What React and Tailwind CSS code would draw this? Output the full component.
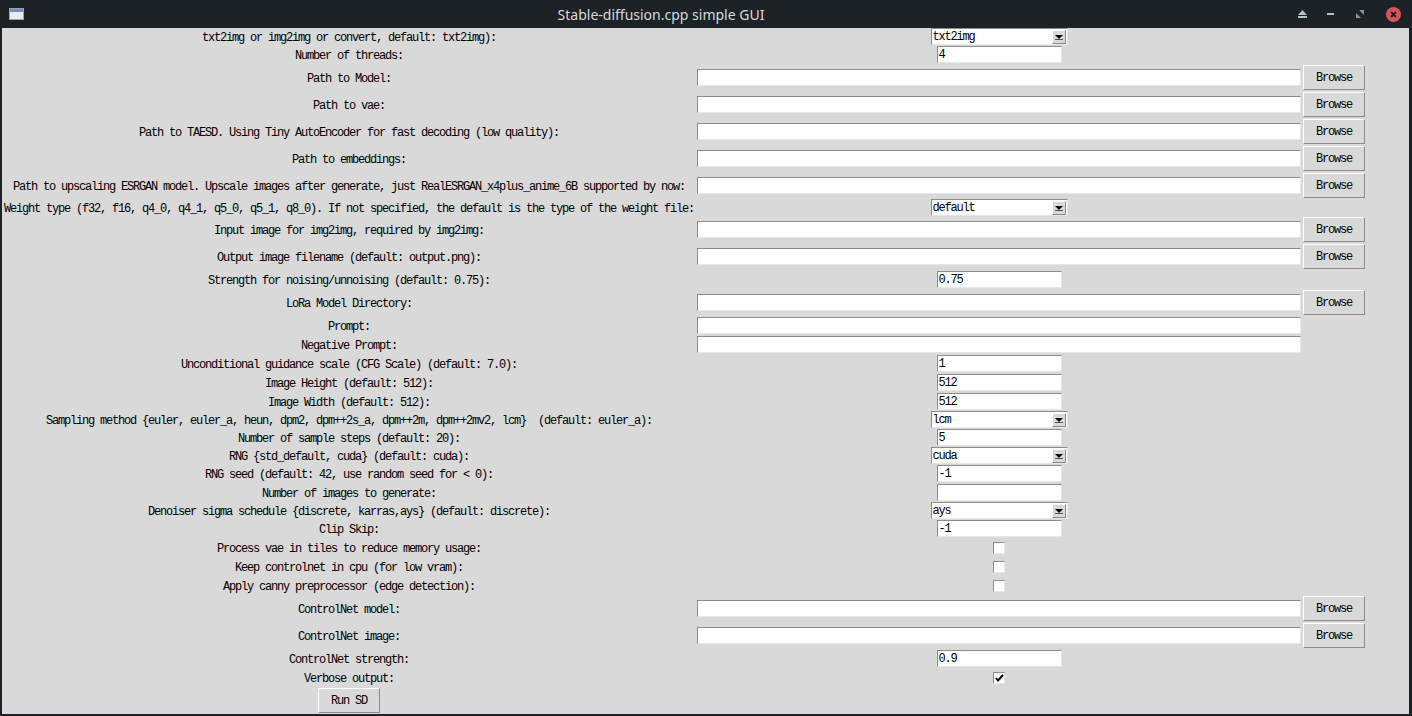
import React from "react";

// form rows, top to bottom (kind decides the widget in the middle column)
const rows = [
  { kind: "combo", label: "txt2img or img2img or convert, default: txt2img):", value: "txt2img" },
  { kind: "short", label: "Number of threads:", value: "4" },
  { kind: "file", label: "Path to Model:" },
  { kind: "file", label: "Path to vae:" },
  { kind: "file", label: "Path to TAESD. Using Tiny AutoEncoder for fast decoding (low quality):" },
  { kind: "file", label: "Path to embeddings:" },
  { kind: "file", label: "Path to upscaling ESRGAN model. Upscale images after generate, just RealESRGAN_x4plus_anime_6B supported by now:" },
  { kind: "combo", label: "Weight type (f32, f16, q4_0, q4_1, q5_0, q5_1, q8_0). If not specified, the default is the type of the weight file:", value: "default" },
  { kind: "file", label: "Input image for img2img, required by img2img:" },
  { kind: "file", label: "Output image filename (default: output.png):" },
  { kind: "short", label: "Strength for noising/unnoising (default: 0.75):", value: "0.75" },
  { kind: "file", label: "LoRa Model Directory:" },
  { kind: "long", label: "Prompt:" },
  { kind: "long", label: "Negative Prompt:" },
  { kind: "short", label: "Unconditional guidance scale (CFG Scale) (default: 7.0):", value: "1" },
  { kind: "short", label: "Image Height (default: 512):", value: "512" },
  { kind: "short", label: "Image Width (default: 512):", value: "512" },
  { kind: "combo", label: "Sampling method {euler, euler_a, heun, dpm2, dpm++2s_a, dpm++2m, dpm++2mv2, lcm}  (default: euler_a):", value: "lcm" },
  { kind: "short", label: "Number of sample steps (default: 20):", value: "5" },
  { kind: "combo", label: "RNG {std_default, cuda} (default: cuda):", value: "cuda" },
  { kind: "short", label: "RNG seed (default: 42, use random seed for < 0):", value: "-1" },
  { kind: "short", label: "Number of images to generate:", value: "" },
  { kind: "combo", label: "Denoiser sigma schedule {discrete, karras,ays} (default: discrete):", value: "ays" },
  { kind: "short", label: "Clip Skip:", value: "-1" },
  { kind: "check", label: "Process vae in tiles to reduce memory usage:" },
  { kind: "check", label: "Keep controlnet in cpu (for low vram):" },
  { kind: "check", label: "Apply canny preprocessor (edge detection):" },
  { kind: "file", label: "ControlNet model:" },
  { kind: "file", label: "ControlNet image:" },
  { kind: "short", label: "ControlNet strength:", value: "0.9" },
  { kind: "check", label: "Verbose output:", checked: true },
];

const heights = {
  combo: "h-[17px]",
  short: "h-[19px]",
  long: "h-[19px]",
  check: "h-[19px]",
  file: "h-[27px]",
};

const tkFont = "font-['Liberation_Mono',monospace] text-[12px] tracking-[-1.2px] text-black";

function Entry({ wide, value }) {
  return (
    <div
      className={`${wide ? "w-[604px]" : "w-[125px]"} h-[17px] bg-white border border-t-[#8c8c8c] border-l-[#8c8c8c] border-b-[#e6e6e6] border-r-[#e6e6e6] flex items-center pl-[1px] pt-[1px] leading-none`}
    >
      {value}
    </div>
  );
}

function Combo({ value }) {
  return (
    <div className="w-[137px] h-[17px] bg-white border border-t-[#8c8c8c] border-l-[#8c8c8c] border-b-[#e6e6e6] border-r-[#e6e6e6] flex items-center justify-between pl-[1px] leading-none">
      <span className="pt-[1px]">{value}</span>
      <span className="w-[14px] h-[14px] mr-[1px] bg-[#d9d9d9] border border-t-white border-l-white border-b-[#8c8c8c] border-r-[#8c8c8c] flex items-center justify-center">
        <svg width="8" height="6" viewBox="0 0 8 6">
          <path d="M0 1h8L4 5z" fill="#000" />
          <rect x="0" y="5" width="8" height="1" fill="#555" />
        </svg>
      </span>
    </div>
  );
}

function Check({ checked }) {
  return (
    <div className="w-[12px] h-[12px] bg-white border border-t-[#8c8c8c] border-l-[#8c8c8c] border-b-[#e6e6e6] border-r-[#e6e6e6] flex items-center justify-center">
      {checked && (
        <svg width="9" height="8" viewBox="0 0 9 8">
          <path d="M1 4l2 2.5L8 1" stroke="#000" strokeWidth="2" fill="none" />
        </svg>
      )}
    </div>
  );
}

function Button({ children }) {
  return (
    <div className="w-[62px] h-[25px] bg-[#d9d9d9] border border-t-white border-l-white border-b-[#8a8a8a] border-r-[#8a8a8a] flex items-center justify-center pt-[1px] leading-none">
      {children}
    </div>
  );
}

function Row({ row }) {
  return (
    <div className={`flex ${heights[row.kind]}`}>
      <div className="w-[694px] flex items-center justify-center pt-[2px] whitespace-pre">{row.label}</div>
      <div className="w-[606px] flex items-center justify-center">
        {row.kind === "combo" && <Combo value={row.value} />}
        {row.kind === "short" && <Entry value={row.value} />}
        {(row.kind === "long" || row.kind === "file") && <Entry wide />}
        {row.kind === "check" && <Check checked={row.checked} />}
      </div>
      <div className="w-[64px] flex items-center justify-center">
        {row.kind === "file" && <Button>Browse</Button>}
      </div>
    </div>
  );
}

export default function App() {
  return (
    <div className="w-[1412px] h-[716px] bg-[#1c2225] flex flex-col overflow-hidden">
      {/* --- Title bar --- */}
      <div className="h-[28px] flex items-center px-[9px] relative">
        <div className="w-[15px] h-[12px] bg-[#e8ecee] border border-[#9aa4a8] flex flex-col">
          <div className="h-[3px] bg-[#6f8fc0]" />
        </div>
        <div className="flex-1 text-center font-['Noto_Sans',sans-serif] text-[14px] text-[#d6dadb]">
          Stable-diffusion.cpp simple GUI
        </div>
        <div className="flex items-center gap-[20px] mr-[2px]">
          <svg width="9" height="8" viewBox="0 0 9 8">
            <path d="M4.5 0L9 5H0z" fill="#b4c2c2" />
            <rect x="0" y="6" width="9" height="2" fill="#b4c2c2" />
          </svg>
          <svg width="7" height="2" viewBox="0 0 7 2">
            <rect width="7" height="2" fill="#b4c2c2" />
          </svg>
          <svg width="8" height="8" viewBox="0 0 8 8" className="mx-[2px]">
            <path d="M3 0h5v5z" fill="#8a9696" />
            <path d="M0 3v5h5z" fill="#8a9696" />
          </svg>
          <div className="w-[15px] h-[15px] rounded-full bg-[#d8525a] flex items-center justify-center">
            <svg width="7" height="7" viewBox="0 0 7 7">
              <path d="M1 1l5 5M6 1l-5 5" stroke="#2a1c1d" strokeWidth="1.8" />
            </svg>
          </div>
        </div>
      </div>

      {/* --- Form --- */}
      <div className={`ml-[2px] mr-[3px] h-[686px] bg-[#d9d9d9] flex flex-col ${tkFont}`}>
        {rows.map((row, i) => (
          <Row key={i} row={row} />
        ))}
        <div className="flex h-[27px]">
          <div className="w-[694px] flex items-center justify-center">
            <Button>Run SD</Button>
          </div>
        </div>
      </div>
    </div>
  );
}
